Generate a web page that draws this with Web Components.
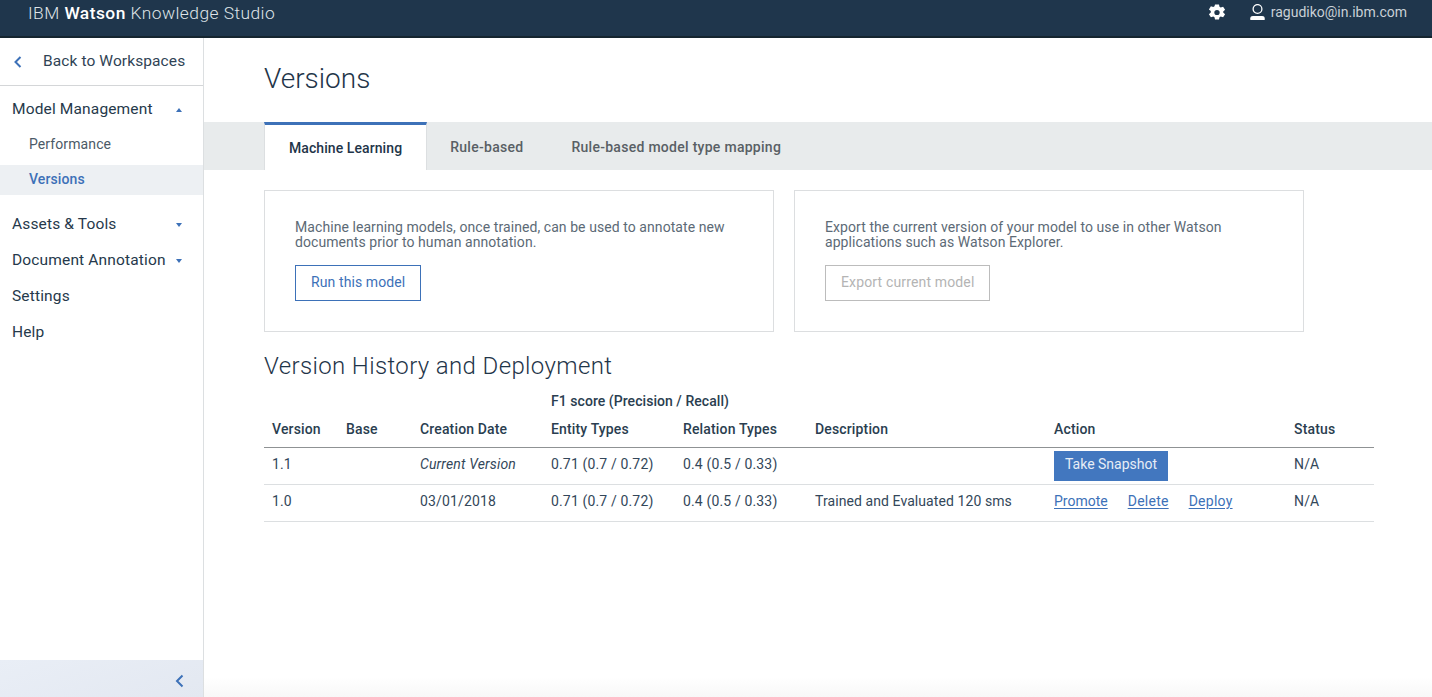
<!DOCTYPE html>
<html>
<head>
<meta charset="utf-8">
<style>
  html, body { margin: 0; height: 100%; }
  body { font-family: "Roboto", "Liberation Sans", sans-serif; color: #1f3549; overflow: hidden; }
  app-shell { height: 697px; }
</style>
</head>
<body>
<app-shell>
  <app-header slot="header"></app-header>
  <side-nav slot="nav">
    <back-link>Back to Workspaces</back-link>
    <nav-group open label="Model Management">
      <nav-sub>Performance</nav-sub>
      <nav-sub active>Versions</nav-sub>
    </nav-group>
    <nav-group caret label="Assets &amp; Tools"></nav-group>
    <nav-group caret label="Document Annotation"></nav-group>
    <nav-group label="Settings"></nav-group>
    <nav-group label="Help"></nav-group>
  </side-nav>
  <versions-page></versions-page>
</app-shell>

<script>
function make(html) {
  var t = document.createElement('template');
  t.innerHTML = html;
  return t;
}

class Base extends HTMLElement {
  connectedCallback() {
    if (this.shadowRoot) return;
    this.attachShadow({mode: 'open'});
    this.shadowRoot.appendChild(this.constructor.template.content.cloneNode(true));
    if (this.ready) this.ready();
  }
}

class AppShell extends Base {}
AppShell.template = make(`
<style>
  :host { display: grid; grid-template-columns: 204px 1fr; grid-template-rows: 38px 1fr; }
  ::slotted(app-header) { grid-column: 1 / 3; }
  main { min-width: 0; background: linear-gradient(#fff 0, #fff 97%, #f8f8f8 100%); }
</style>
<slot name="header"></slot>
<slot name="nav"></slot>
<main><slot></slot></main>
`);

class AppHeader extends Base {}
AppHeader.template = make(`
<style>
  :host { display: flex; align-items: flex-start; justify-content: space-between; box-sizing: border-box; height: 38px;
    background: #1f364c; border-bottom: 2px solid #15252f; color: #dfe4e8; }
  .brand { padding: 3px 0 0 28px; font-size: 17.4px; line-height: 20px; font-weight: 300; letter-spacing: .45px; }
  .brand b { font-weight: 500; color: #fff; }
  .right { display: flex; align-items: center; height: 24px; }
  svg { display: block; }
  .user { margin-left: 24px; margin-right: 6px; }
  .mail { font-size: 14px; letter-spacing: 0; margin-right: 25px; color: #c9d0d6; font-weight: 400; }
</style>
<div class="brand">IBM <b>Watson</b> Knowledge Studio</div>
<div class="right">
  <svg width="18" height="17" viewBox="0 0 18 18" preserveAspectRatio="none"><path fill="#fff" fill-rule="evenodd" d="M7 .5h4l.5 2.500 1.200.7 2.400-.8 2 3.300-1.900 1.700v1.200l1.900 1.700-2 3.300-2.400-.8-1.200.7-.5 2.500H7l-.5-2.500-1.200-.7-2.400.8-2-3.300 1.900-1.700V7.400L.9 5.700l2-3.300 2.400.8 1.200-.7zM9 6.300a2.700 2.700 0 1 0 0 5.400 2.700 2.700 0 0 0 0-5.400z"/></svg>
  <svg class="user" width="15" height="16" viewBox="0 0 15 16"><circle cx="7.500" cy="5" r="4.400" fill="none" stroke="#fff" stroke-width="1.300"/><path fill="#fff" d="M.3 16v-1.800c0-1.400 1.100-2.200 2.500-2.200h9.400c1.400 0 2.500.8 2.500 2.200V16z"/></svg>
  <span class="mail">ragudiko@in.ibm.com</span>
</div>
`);

class SideNav extends Base {}
SideNav.template = make(`
<style>
  :host { display: flex; flex-direction: column; height: 659px; box-sizing: border-box; border-right: 1px solid #dcdfe1; background: #fff; }
  .list { flex: 1; }
  .foot { height: 37px; margin-top: auto; display: flex; justify-content: flex-end; align-items: center; padding-right: 19px;
    background: linear-gradient(160deg, #e9eef6, #e3e8f1); }
  svg { display: block; margin-top: 5px; }
</style>
<div class="list"><slot></slot></div>
<div class="foot"><svg width="9" height="14" viewBox="0 0 9 14"><path d="M7.500 1.500 2 7l5.500 5.500" fill="none" stroke="#3d71b8" stroke-width="2"/></svg></div>
`);

class BackLink extends Base {}
BackLink.template = make(`
<style>
  :host { display: flex; align-items: center; height: 48px; box-sizing: border-box; border-bottom: 1px solid #d4d6d8; margin-bottom: 5px;
    font-size: 15.500px; letter-spacing: .1px; color: #2f4355; padding-left: 14px; padding-bottom: 1px; }
  svg { display: block; margin-right: 21px; margin-top: 2px; }
</style>
<svg width="8" height="12" viewBox="0 0 8 12"><path d="M6.500 1 1.500 6l5 5" fill="none" stroke="#3d71b8" stroke-width="2"/></svg>
<slot></slot>
`);

class NavGroup extends Base {
  ready() {
    this.shadowRoot.querySelector('.label').textContent = this.getAttribute('label');
    if (this.hasAttribute('open')) this.shadowRoot.querySelector('.tri').classList.add('up');
    else if (!this.hasAttribute('caret')) this.shadowRoot.querySelector('.tri').remove();
  }
}
NavGroup.template = make(`
<style>
  :host { display: block; }
  .row { display: flex; align-items: center; justify-content: space-between; height: 36px; padding: 0 21px 0 12px;
    font-size: 15.500px; letter-spacing: .15px; color: #26394b; }
  .tri { width: 0; height: 0; border: 3.500px solid transparent; border-top: 4px solid #3d71b8; border-bottom: 0; margin-top: 1px; }
  .tri.up { border-top: 0; border-bottom: 4px solid #3d71b8; }
  :host([open]) .kids { padding-top: 2px; }
</style>
<div class="row"><span class="label"></span><span class="tri"></span></div>
<div class="kids"><slot></slot></div>
`);

class NavSub extends Base {}
NavSub.template = make(`
<style>
  :host { display: flex; align-items: center; box-sizing: border-box; height: 30px; padding-left: 29px; margin-bottom: 6px;
    font-size: 14px; letter-spacing: .1px; color: #4b5a67; }
  :host([active]) { background: #edf0f3; color: #3d71b8; font-weight: 500; margin-bottom: 11px; padding-bottom: 3px; }
</style>
<slot></slot>
`);

class TabBar extends Base {}
TabBar.template = make(`
<style>
  :host { display: flex; height: 48px; background: #e8ebec; padding-left: 60px; margin-bottom: 20px; }
</style>
<slot></slot>
`);

class TabItem extends Base {}
TabItem.template = make(`
<style>
  :host { display: flex; align-items: center; box-sizing: border-box; padding: 2px 24px 0; font-size: 14px; letter-spacing: .28px; color: #595f65; font-weight: 500; }
  :host([active]) { background: #fff; color: #1f3549; letter-spacing: .08px; padding-top: 0; margin-right: -1px; border-top: 3px solid #3d71b8; border-left: 1px solid #dcdfe1; border-right: 1px solid #dcdfe1; }
</style>
<slot></slot>
`);

class InfoCard extends Base {}
InfoCard.template = make(`
<style>
  :host { display: block; box-sizing: border-box; width: 510px; height: 142px; border: 1px solid #dcdee0; padding: 29px 30px 0; }
  p { margin: 0 0 15px; font-size: 14px; line-height: 15px; letter-spacing: .07px; color: #5c6a76; }
</style>
<p><slot></slot></p>
<slot name="action"></slot>
`);

class OutlineBtn extends Base {}
OutlineBtn.template = make(`
<style>
  :host { display: inline-flex; align-items: center; box-sizing: border-box; height: 36px; padding: 0 15px 3px; border: 1px solid #3d71b8;
    color: #3d71b8; font-size: 14px; letter-spacing: .1px; }
  :host([disabled]) { border-color: #bcbcbc; color: #b4b4b4; letter-spacing: .15px; }
</style>
<slot></slot>
`);

class VersionTable extends Base {}
VersionTable.template = make(`
<style>
  :host { display: block; width: 1110px; font-size: 14px; letter-spacing: .15px; color: #33475a; }
  table { border-collapse: collapse; table-layout: fixed; width: 100%; }
  th, td { padding: 0 0 0 8px; text-align: left; white-space: nowrap; }
  th { font-weight: 500; color: #2a3e50; }
  thead tr:first-child th { height: 28px; }
  thead tr:first-child th.f1 { letter-spacing: .05px; }
  thead tr:last-child th { height: 28px; padding-bottom: 4px; border-bottom: 1px solid #8f9294; }
  tbody td { height: 32px; padding-bottom: 4px; border-bottom: 1px solid #dcdfe1; }
  tbody td.btn { padding-bottom: 0; height: 36px; }
  .desc { letter-spacing: .08px; }
  .snap { display: block; width: max-content; padding: 0 11px 4px; line-height: 26px; background: #4277bf; color: #e6edf6; letter-spacing: 0; }
  a { color: #3d71b8; text-decoration: underline; text-underline-offset: 2px; margin-right: 20px; letter-spacing: .25px; }
  a:first-child { letter-spacing: 0; }
  em { font-style: italic; }
</style>
<table>
  <colgroup><col style="width:74px"><col style="width:74px"><col style="width:131px"><col style="width:132px"><col style="width:132px"><col style="width:239px"><col style="width:240px"><col style="width:88px"></colgroup>
  <thead>
    <tr><th></th><th></th><th></th><th class="f1" colspan="2">F1 score (Precision / Recall)</th><th></th><th></th><th></th></tr>
    <tr><th>Version</th><th>Base</th><th>Creation Date</th><th>Entity Types</th><th>Relation Types</th><th>Description</th><th>Action</th><th>Status</th></tr>
  </thead>
  <tbody>
    <tr><td>1.1</td><td></td><td><em>Current Version</em></td><td>0.71 (0.7 / 0.72)</td><td>0.4 (0.5 / 0.33)</td><td></td><td class="btn"><span class="snap">Take Snapshot</span></td><td>N/A</td></tr>
    <tr><td>1.0</td><td></td><td>03/01/2018</td><td>0.71 (0.7 / 0.72)</td><td>0.4 (0.5 / 0.33)</td><td class="desc">Trained and Evaluated 120 sms</td><td><a>Promote</a><a>Delete</a><a>Deploy</a></td><td>N/A</td></tr>
  </tbody>
</table>
`);

class VersionsPage extends Base {}
VersionsPage.template = make(`
<style>
  :host { display: block; }
  h1 { margin: 0; padding: 24px 0 0 60px; height: 60px; font-size: 28px; line-height: 34px; font-weight: 300; letter-spacing: 0; color: #1f3549; }
  .cards { display: flex; gap: 20px; padding-left: 60px; }
  h2 { margin: 0; padding: 19px 0 0 60px; height: 36px; font-size: 24px; line-height: 30px; font-weight: 300; letter-spacing: .37px; color: #1f3549; }
  .tbl { padding-left: 60px; }
</style>
<h1>Versions</h1>
<tab-bar>
  <tab-item active>Machine Learning</tab-item>
  <tab-item>Rule-based</tab-item>
  <tab-item>Rule-based model type mapping</tab-item>
</tab-bar>
<div class="cards">
  <info-card>Machine learning models, once trained, can be used to annotate new documents prior to human annotation.<outline-btn slot="action">Run this model</outline-btn></info-card>
  <info-card>Export the current version of your model to use in other Watson applications such as Watson Explorer.<outline-btn slot="action" disabled>Export current model</outline-btn></info-card>
</div>
<h2>Version History and Deployment</h2>
<div class="tbl"><version-table></version-table></div>
`);

customElements.define('app-shell', AppShell);
customElements.define('app-header', AppHeader);
customElements.define('side-nav', SideNav);
customElements.define('back-link', BackLink);
customElements.define('nav-group', NavGroup);
customElements.define('nav-sub', NavSub);
customElements.define('tab-bar', TabBar);
customElements.define('tab-item', TabItem);
customElements.define('info-card', InfoCard);
customElements.define('outline-btn', OutlineBtn);
customElements.define('version-table', VersionTable);
customElements.define('versions-page', VersionsPage);
</script>
</body>
</html>
